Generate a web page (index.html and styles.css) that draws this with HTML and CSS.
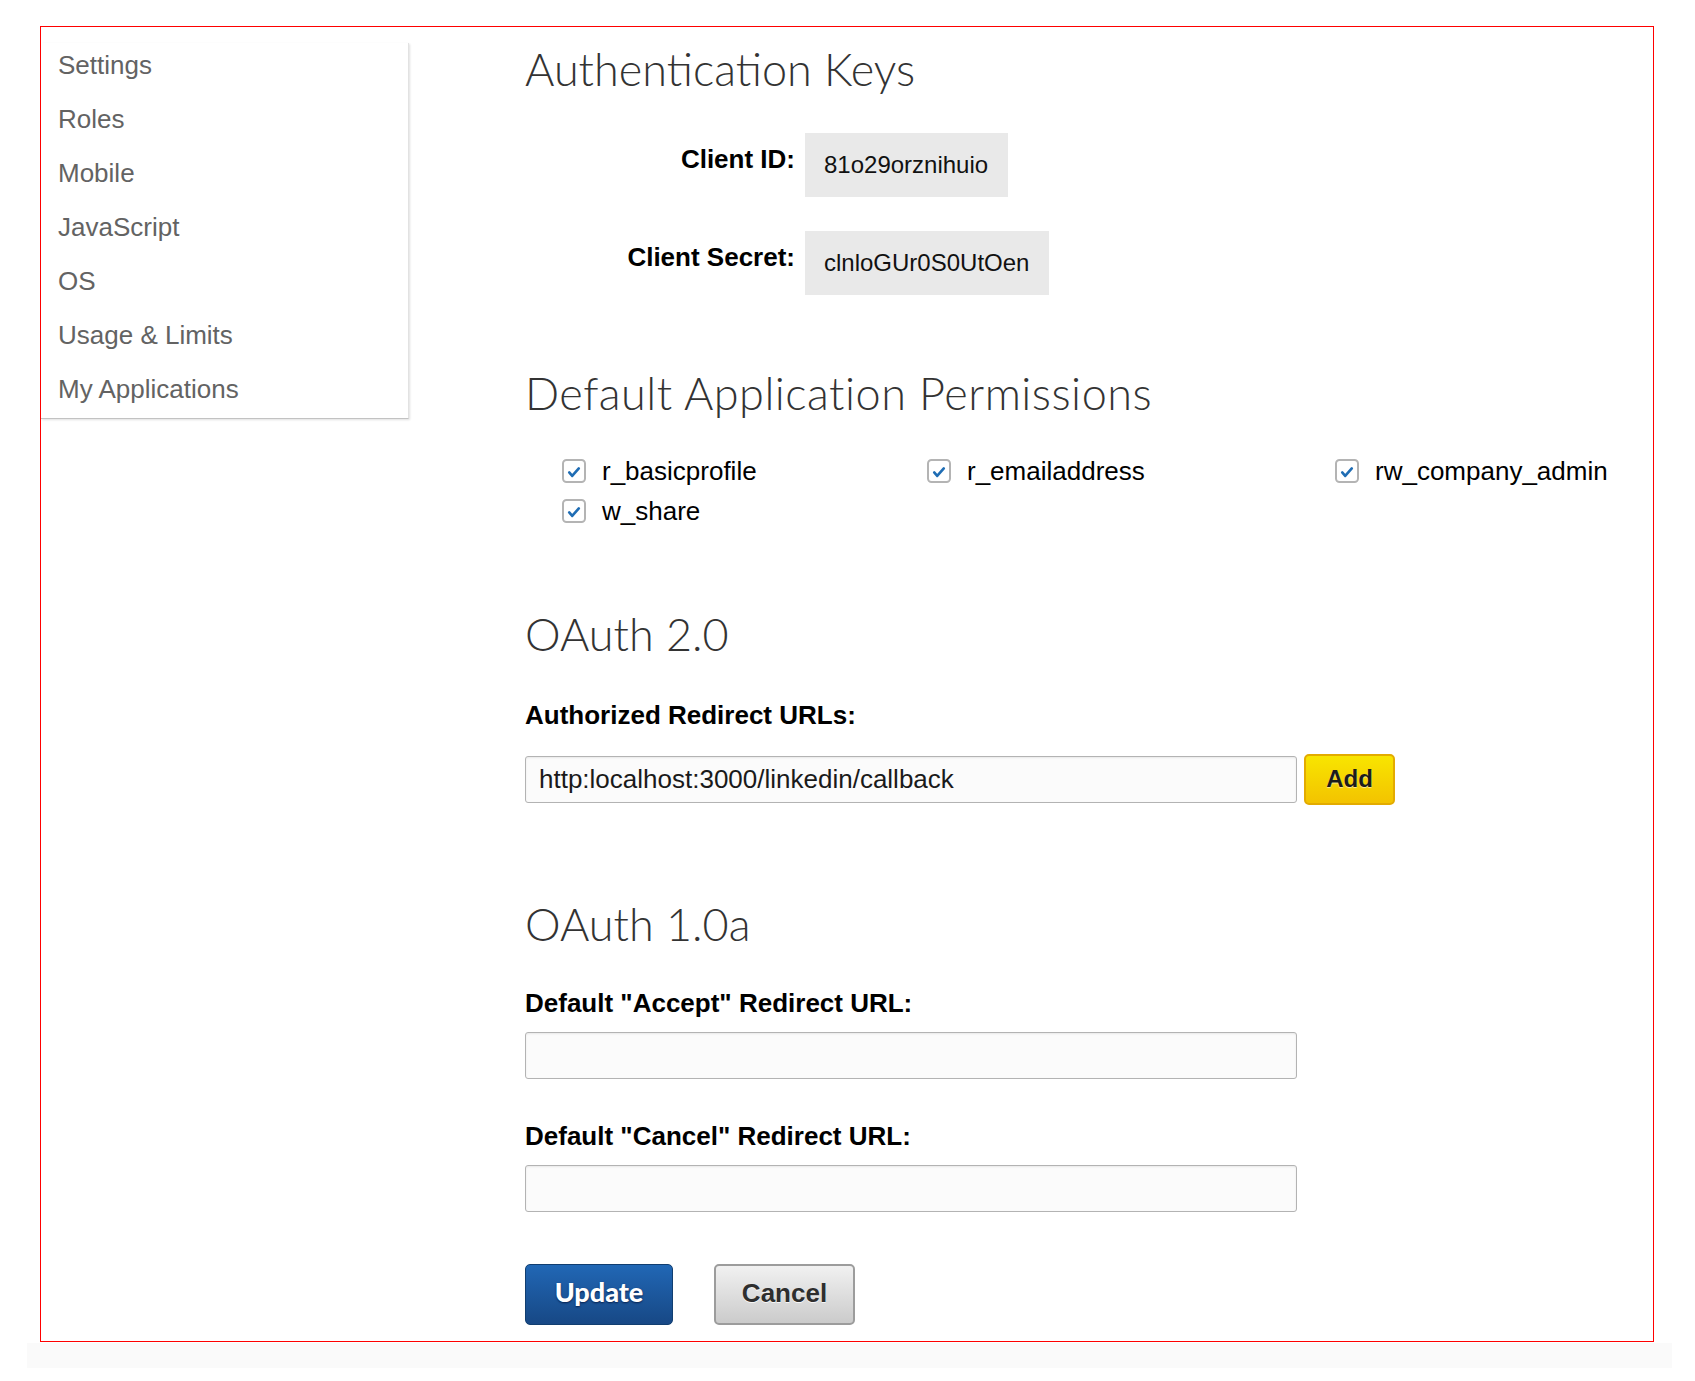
FILE: index.html
```html
<!DOCTYPE html>
<html lang="en">
<head>
<meta charset="utf-8">
<title>Application Settings</title>
<link rel="stylesheet" href="styles.css">
</head>
<body>
<div class="frame">
  <nav class="sidebar">
    <a class="nav-item" href="#">Settings</a>
    <a class="nav-item" href="#">Roles</a>
    <a class="nav-item" href="#">Mobile</a>
    <a class="nav-item" href="#">JavaScript</a>
    <a class="nav-item" href="#">OS</a>
    <a class="nav-item" href="#">Usage &amp; Limits</a>
    <a class="nav-item" href="#">My Applications</a>
  </nav>
  <main class="content">
    <h2 class="heading heading-auth">Authentication Keys</h2>
    <div class="keys">
      <div class="key-row">
        <span class="key-label">Client ID:</span>
        <span class="key-value">81o29orznihuio</span>
      </div>
      <div class="key-row">
        <span class="key-label">Client Secret:</span>
        <span class="key-value">clnloGUr0S0UtOen</span>
      </div>
    </div>

    <h2 class="heading heading-perms">Default Application Permissions</h2>
    <div class="perms">
      <label class="perm"><svg class="check" viewBox="0 0 24 24"><rect x="1" y="1" width="22" height="22" rx="3.5" fill="#fff" stroke="#b4b4b4" stroke-width="2"/><path d="M7.2 13.4 L10.2 16.9 L16.8 9.4" fill="none" stroke="#1f6db4" stroke-width="2.6" stroke-linecap="round" stroke-linejoin="round"/></svg><span>r_basicprofile</span></label>
      <label class="perm"><svg class="check" viewBox="0 0 24 24"><rect x="1" y="1" width="22" height="22" rx="3.5" fill="#fff" stroke="#b4b4b4" stroke-width="2"/><path d="M7.2 13.4 L10.2 16.9 L16.8 9.4" fill="none" stroke="#1f6db4" stroke-width="2.6" stroke-linecap="round" stroke-linejoin="round"/></svg><span>r_emailaddress</span></label>
      <label class="perm"><svg class="check" viewBox="0 0 24 24"><rect x="1" y="1" width="22" height="22" rx="3.5" fill="#fff" stroke="#b4b4b4" stroke-width="2"/><path d="M7.2 13.4 L10.2 16.9 L16.8 9.4" fill="none" stroke="#1f6db4" stroke-width="2.6" stroke-linecap="round" stroke-linejoin="round"/></svg><span>rw_company_admin</span></label>
      <label class="perm"><svg class="check" viewBox="0 0 24 24"><rect x="1" y="1" width="22" height="22" rx="3.5" fill="#fff" stroke="#b4b4b4" stroke-width="2"/><path d="M7.2 13.4 L10.2 16.9 L16.8 9.4" fill="none" stroke="#1f6db4" stroke-width="2.6" stroke-linecap="round" stroke-linejoin="round"/></svg><span>w_share</span></label>
    </div>

    <h2 class="heading heading-oauth2">OAuth 2.0</h2>
    <div class="field-label label-authorized">Authorized Redirect URLs:</div>
    <div class="url-row">
      <div class="text-input">http:localhost:3000/linkedin/callback</div>
      <button class="btn-add" type="button">Add</button>
    </div>

    <h2 class="heading heading-oauth1">OAuth 1.0a</h2>
    <div class="field-label label-accept">Default "Accept" Redirect URL:</div>
    <div class="text-input input-accept"></div>
    <div class="field-label label-cancel">Default "Cancel" Redirect URL:</div>
    <div class="text-input input-cancel"></div>

    <div class="actions">
      <button class="btn-update" type="button">Update</button>
      <button class="btn-cancel" type="button">Cancel</button>
    </div>
  </main>
</div>
<div class="footer-band"></div>
</body>
</html>
```
FILE: styles.css
```css
* {
  box-sizing: border-box;
}

body {
  margin: 0;
  background: #ffffff;
  font-family: "Liberation Sans", Arial, Helvetica, sans-serif;
  color: #111;
}

.frame {
  margin: 26px 0 0 40px;
  width: 1614px;
  height: 1316px;
  border: 1px solid #ff0000;
  display: flex;
  align-items: flex-start;
}

.sidebar {
  width: 368px;
  margin-top: 16px;
  padding: 7px 0 14px 17px;
  display: flex;
  flex-direction: column;
  gap: 24px;
  border-right: 1px solid #e2e2e2;
  border-bottom: 1px solid #c2c2c2;
  box-shadow: 1px 1px 2px rgba(0, 0, 0, 0.12);
}

.nav-item {
  font-size: 26px;
  line-height: 30px;
  color: #636363;
  text-decoration: none;
}

.content {
  padding: 15px 0 0 116px;
  display: flex;
  flex-direction: column;
  align-items: flex-start;
}

.heading {
  margin: 0;
  font-family: Lato, "Open Sans", sans-serif;
  font-weight: 300;
  font-size: 45px;
  line-height: 54px;
  color: #333;
}

.keys {
  margin-top: 37px;
  display: flex;
  flex-direction: column;
  gap: 34px;
}

.key-row {
  display: flex;
  align-items: flex-start;
  gap: 10px;
}

.key-label {
  width: 270px;
  padding-top: 11px;
  text-align: right;
  font-weight: bold;
  font-size: 26px;
  line-height: 30px;
  color: #000;
}

.key-value {
  background: #e9e9e9;
  padding: 0 20px 1px 19px;
  font-size: 24px;
  line-height: 63px;
  color: #111;
}

.heading-perms {
  margin-top: 71px;
  letter-spacing: 0.5px;
}

.perms {
  margin: 31px 0 0 37px;
  display: grid;
  grid-template-columns: 365px 408px auto;
  grid-auto-rows: 40px;
}

.perm {
  display: flex;
  align-items: center;
  gap: 16px;
  font-size: 26px;
  color: #000;
}

.check {
  width: 24px;
  height: 24px;
  flex: none;
}

.heading-oauth2 {
  margin-top: 76px;
}

.field-label {
  font-weight: bold;
  font-size: 26px;
  line-height: 30px;
  color: #000;
}

.label-authorized {
  margin-top: 39px;
}

.url-row {
  margin-top: 24px;
  display: flex;
  align-items: center;
  gap: 7px;
}

.text-input {
  width: 772px;
  height: 47px;
  border: 1px solid #b3b3b3;
  border-radius: 3px;
  background: #fbfbfb;
  box-shadow: inset 0 1px 2px rgba(0, 0, 0, 0.08);
  padding: 0 13px;
  font-size: 26px;
  line-height: 45px;
  color: #1a1a1a;
}

.btn-add {
  width: 91px;
  height: 51px;
  border: 2px solid #e3ab00;
  border-radius: 5px;
  background: linear-gradient(#f8e500, #f3c300);
  font-family: "Liberation Sans", Arial, sans-serif;
  font-weight: bold;
  font-size: 24px;
  line-height: 45px;
  color: #1c1c1c;
  text-shadow: 0 1px 1px rgba(255, 255, 255, 0.6);
  padding: 0 0 2px;
}

.heading-oauth1 {
  margin-top: 92px;
}

.label-accept {
  margin-top: 37px;
}

.input-accept {
  margin-top: 14px;
}

.label-cancel {
  margin-top: 42px;
}

.input-cancel {
  margin-top: 14px;
}

.actions {
  margin-top: 52px;
  display: flex;
  gap: 41px;
}

.btn-update,
.btn-cancel {
  height: 61px;
  border-radius: 5px;
  font-size: 26px;
  padding: 0 0 3px;
}

.btn-update {
  width: 148px;
  border: 1px solid #113e70;
  background: linear-gradient(#2167b5, #174885);
  color: #fff;
  font-family: Lato, "Liberation Sans", sans-serif;
  font-weight: 900;
  font-size: 27px;
  padding-bottom: 6px;
  text-shadow: 0 1px 2px rgba(0, 20, 60, 0.8);
}

.btn-cancel {
  width: 141px;
  border: 2px solid #9c9c9c;
  background: linear-gradient(#f1f1f1, #cbcbcb);
  color: #2e2e2e;
  font-family: "Liberation Sans", Arial, sans-serif;
  font-weight: bold;
  text-shadow: 0 1px 0 rgba(255, 255, 255, 0.8);
}

.footer-band {
  margin: 1px 0 0 27px;
  width: 1645px;
  height: 25px;
  background: #fafafa;
}
```
